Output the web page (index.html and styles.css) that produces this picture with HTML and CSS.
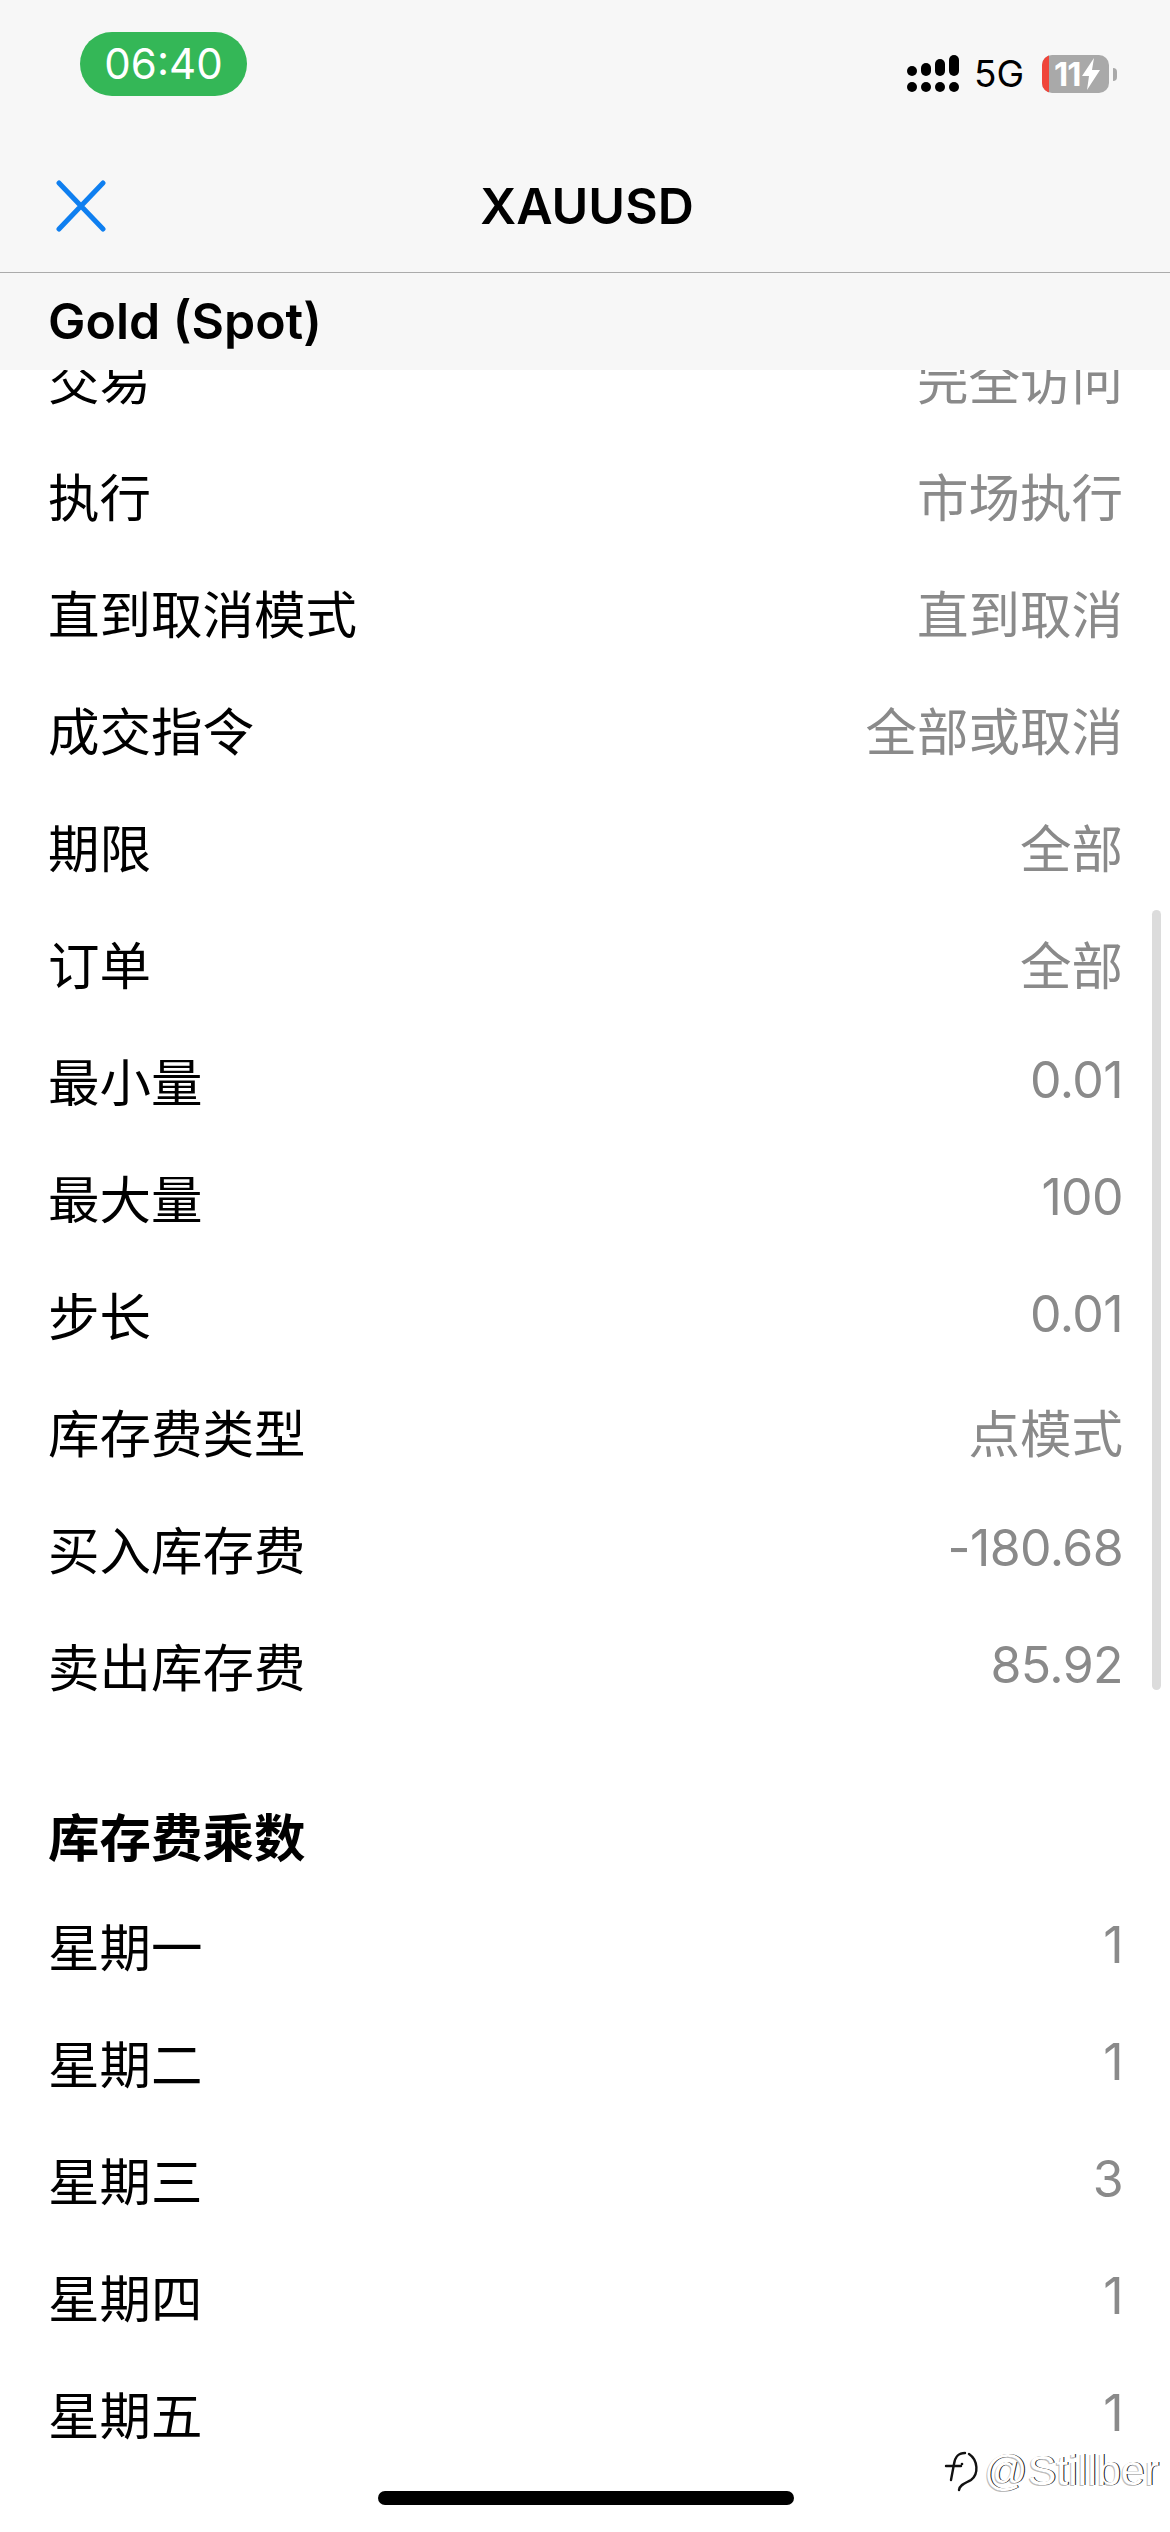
FILE: index.html
```html
<!DOCTYPE html>
<html>
<head>
    <title>XAUUSD</title>
    <link rel="stylesheet" href="styles.css">
</head>
<body>

<div class="screen">
    <div class="top">
        <div class="status">
            <div class="time">06:40</div>
            <div class="status-right">
                <svg class="signal" width="52" height="38" viewBox="0 0 52 38">
                    <rect x="0" y="11" width="10" height="10" rx="5"/>
                    <rect x="14" y="8" width="10" height="13" rx="5"/>
                    <rect x="28" y="4" width="10" height="17" rx="5"/>
                    <rect x="42" y="0" width="10" height="21" rx="5"/>
                    <circle cx="5" cy="32" r="5"/>
                    <circle cx="19" cy="32" r="5"/>
                    <circle cx="33" cy="32" r="5"/>
                    <circle cx="47" cy="32" r="5"/>
                </svg>
                <span class="net">5G</span>
                <div class="battery">
                    <div class="battery-low"></div>
                    <span class="battery-num">11</span>
                    <svg class="bolt" width="18" height="32" viewBox="0 0 18 32">
                        <path d="M12 0 L0 18 H7 L5 32 L18 12 H10 Z" fill="#fff"/>
                    </svg>
                </div>
                <div class="battery-nub"></div>
            </div>
        </div>

        <div class="nav">
            <svg class="close" width="50" height="52" viewBox="0 0 50 52">
                <path d="M3 3 L47 49 M47 3 L3 49" stroke="#0f7ff0" stroke-width="5" stroke-linecap="round" fill="none"/>
            </svg>
            <div class="nav-title">XAUUSD</div>
        </div>

        <div class="subtitle">Gold (Spot)</div>
    </div>

    <div class="list">
        <div class="row"><span>交易</span><span class="val">完全访问</span></div>
        <div class="row"><span>执行</span><span class="val">市场执行</span></div>
        <div class="row"><span>直到取消模式</span><span class="val">直到取消</span></div>
        <div class="row"><span>成交指令</span><span class="val">全部或取消</span></div>
        <div class="row"><span>期限</span><span class="val">全部</span></div>
        <div class="row"><span>订单</span><span class="val">全部</span></div>
        <div class="row"><span>最小量</span><span class="val num">0.01</span></div>
        <div class="row"><span>最大量</span><span class="val num">100</span></div>
        <div class="row"><span>步长</span><span class="val num">0.01</span></div>
        <div class="row"><span>库存费类型</span><span class="val">点模式</span></div>
        <div class="row"><span>买入库存费</span><span class="val num">-180.68</span></div>
        <div class="row"><span>卖出库存费</span><span class="val num">85.92</span></div>

        <h3 class="section">库存费乘数</h3>
        <div class="row"><span>星期一</span><span class="val num">1</span></div>
        <div class="row"><span>星期二</span><span class="val num">1</span></div>
        <div class="row"><span>星期三</span><span class="val num">3</span></div>
        <div class="row"><span>星期四</span><span class="val num">1</span></div>
        <div class="row"><span>星期五</span><span class="val num">1</span></div>
    </div>

    <!-- поверх списка -->
    <div class="scrollbar"></div>
    <div class="home-bar"></div>
    <div class="mark">
        <svg width="38" height="42" viewBox="0 0 38 42">
            <path d="M22 3 C14 3 12 8 11 14 L8 30 M3 16 H18 M26 4 C35 10 36 24 28 30 C23 33 17 34 16 40" fill="none" stroke="#111" stroke-width="2.4" stroke-linecap="round"/>
            <circle cx="19" cy="14" r="1.3" fill="#111"/>
        </svg>
        <span class="mark-text">@Stillber</span>
    </div>
</div>

</body>
</html>
```

FILE: styles.css
```css
html, body {
    margin: 0;
    padding: 0;
    background: #fff;
}
.screen {
    position: relative;
    width: 1170px;
    height: 2532px;
    overflow: hidden;
    background: #fff;
    color: #000;
    font-family: Inter, "Noto Sans CJK SC", sans-serif;
}

/* Шапка */
.top {
    position: relative;
    z-index: 2;
    height: 370px;
    background: #f7f7f7;
}
.status {
    height: 140px;
    box-sizing: border-box;
    display: flex;
    justify-content: space-between;
    align-items: flex-start;
    padding: 32px 53px 0 80px;
}
.time {
    width: 167px;
    height: 64px;
    border-radius: 32px;
    background: #34b757;
    color: #fff;
    font-size: 42px;
    line-height: 64px;
    text-align: center;
}
.status-right {
    display: flex;
    align-items: center;
    height: 38px;
    margin-top: 23px;
}
.signal {
    margin-right: 15px;
}
.net {
    width: 68px;
    font-size: 37px;
    line-height: 38px;
}
.battery {
    width: 67px;
    height: 38px;
    border-radius: 10px;
    background: #a9a9a9;
    overflow: hidden;
    display: flex;
    align-items: center;
}
.battery-low {
    width: 7px;
    height: 38px;
    background: #f0453a;
    margin-right: 5px;
}
.battery-num {
    color: #fff;
    font-size: 33px;
    font-weight: 700;
    line-height: 38px;
    letter-spacing: -1px;
}
.bolt {
    margin-left: 2px;
}
.battery-nub {
    width: 4px;
    height: 13px;
    margin-left: 4px;
    border-radius: 0 6px 6px 0;
    background: #a9a9a9;
}

.nav {
    height: 133px;
    box-sizing: border-box;
    display: grid;
    grid-template-columns: 1fr auto 1fr;
    align-items: center;
    padding: 0 52px 0 56px;
    border-bottom: 1px solid #ababab;
}
.nav-title {
    font-size: 50px;
    font-weight: 600;
}
.subtitle {
    height: 96px;
    line-height: 96px;
    padding-left: 48px;
    font-size: 50px;
    font-weight: 600;
}

/* Список */
.list {
    margin-top: -51px;
    font-size: 51.5px;
}
.row {
    height: 117px;
    display: flex;
    justify-content: space-between;
    align-items: center;
    padding: 0 47px 0 48px;
}
.val {
    color: #8a8a8a;
}
.num {
    font-size: 50px;
    letter-spacing: -0.6px;
}
.section {
    margin: 68px 0 0;
    height: 95px;
    line-height: 95px;
    padding-left: 48px;
    font-size: 51.5px;
    font-weight: 700;
}

.scrollbar {
    position: absolute;
    left: 1152px;
    top: 910px;
    width: 9px;
    height: 780px;
    border-radius: 5px;
    background: #dcdcdc;
}
.home-bar {
    position: absolute;
    left: 378px;
    top: 2491px;
    width: 416px;
    height: 14px;
    border-radius: 7px;
    background: #000;
}
.mark {
    position: absolute;
    left: 943px;
    top: 2446px;
    display: flex;
    align-items: center;
    gap: 3px;
}
.mark-text {
    color: #fff;
    font-family: "Liberation Sans", sans-serif;
    font-size: 43px;
    text-shadow: 1px 0 0 #111, -1px 1px 0 #bbb;
}
```
